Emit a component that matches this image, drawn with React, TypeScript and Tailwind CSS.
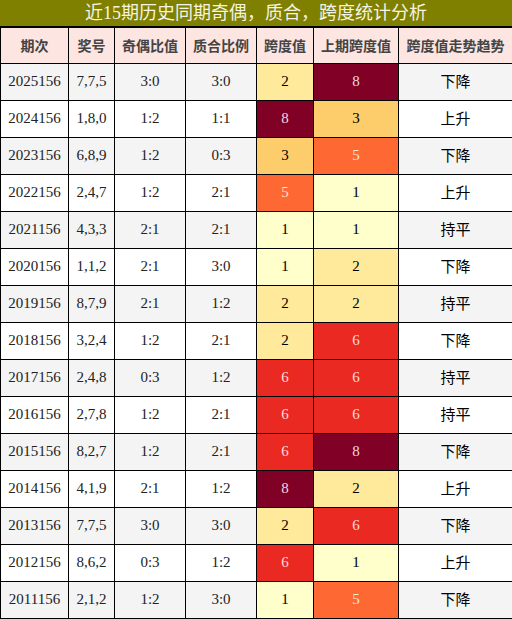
const rows = [
  ['2025156', '7,7,5', '3:0', '3:0', 2, 8, '下降'],
  ['2024156', '1,8,0', '1:2', '1:1', 8, 3, '上升'],
  ['2023156', '6,8,9', '1:2', '0:3', 3, 5, '下降'],
  ['2022156', '2,4,7', '1:2', '2:1', 5, 1, '上升'],
  ['2021156', '4,3,3', '2:1', '2:1', 1, 1, '持平'],
  ['2020156', '1,1,2', '2:1', '3:0', 1, 2, '下降'],
  ['2019156', '8,7,9', '2:1', '1:2', 2, 2, '持平'],
  ['2018156', '3,2,4', '1:2', '2:1', 2, 6, '下降'],
  ['2017156', '2,4,8', '0:3', '1:2', 6, 6, '持平'],
  ['2016156', '2,7,8', '1:2', '2:1', 6, 6, '持平'],
  ['2015156', '8,2,7', '1:2', '2:1', 6, 8, '下降'],
  ['2014156', '4,1,9', '2:1', '1:2', 8, 2, '上升'],
  ['2013156', '7,7,5', '3:0', '3:0', 2, 6, '下降'],
  ['2012156', '8,6,2', '0:3', '1:2', 6, 1, '上升'],
  ['2011156', '2,1,2', '1:2', '3:0', 1, 5, '下降'],
] as const

const spanColor: Record<number, string> = {
  1: 'bg-[#ffffcc] text-black',
  2: 'bg-[#ffe99b] text-black',
  3: 'bg-[#fecd6b] text-black',
  5: 'bg-[#fe6933] text-[#ffe4d6]',
  6: 'bg-[#ea2a22] text-[#ffdcd6]',
  8: 'bg-[#800026] text-[#f6d6dc]',
}

const headers = ['期次', '奖号', '奇偶比值', '质合比例', '跨度值', '上期跨度值', '跨度值走势趋势']
const widths = ['w-[68px]', 'w-[46px]', 'w-[71px]', 'w-[71px]', 'w-[57px]', 'w-[85px]', 'w-[114px]']

export default function App() {
  return (
    <div className="w-[512px] h-[619px] bg-white font-['Liberation_Serif','Noto_Sans_CJK_SC',serif] text-[15px] text-[#222]">
      <div className="h-[28px] bg-[#808000] border-b-2 border-black flex items-center justify-center text-[18px] leading-none text-[#f4f4e4]">
        近15期历史同期奇偶，质合，跨度统计分析
      </div>
      <table className="w-[512px] table-fixed border-collapse">
        <colgroup>
          {widths.map((w, i) => (
            <col key={i} className={w} />
          ))}
        </colgroup>
        <thead>
          <tr className="h-[35px] bg-[#fde5e1]">
            {headers.map((h) => (
              <th
                key={h}
                className="border border-black border-t-0 p-0 text-[14px] font-bold text-[#444] font-['Noto_Sans_CJK_SC',sans-serif]"
              >
                {h}
              </th>
            ))}
          </tr>
        </thead>
        <tbody>
          {rows.map((r, i) => (
            <tr key={r[0]} className={`h-[37px] ${i % 2 === 0 ? 'bg-[#f4f4f4]' : 'bg-white'}`}>
              <td className="border border-black p-0 text-center">{r[0]}</td>
              <td className="border border-black p-0 text-center">{r[1]}</td>
              <td className="border border-black p-0 text-center">{r[2]}</td>
              <td className="border border-black p-0 text-center">{r[3]}</td>
              <td className={`border border-black p-0 text-center ${spanColor[r[4]]}`}>{r[4]}</td>
              <td className={`border border-black p-0 text-center ${spanColor[r[5]]}`}>{r[5]}</td>
              <td className="border border-black p-0 text-center text-black font-['Noto_Sans_CJK_SC',sans-serif]">
                {r[6]}
              </td>
            </tr>
          ))}
        </tbody>
      </table>
    </div>
  )
}
